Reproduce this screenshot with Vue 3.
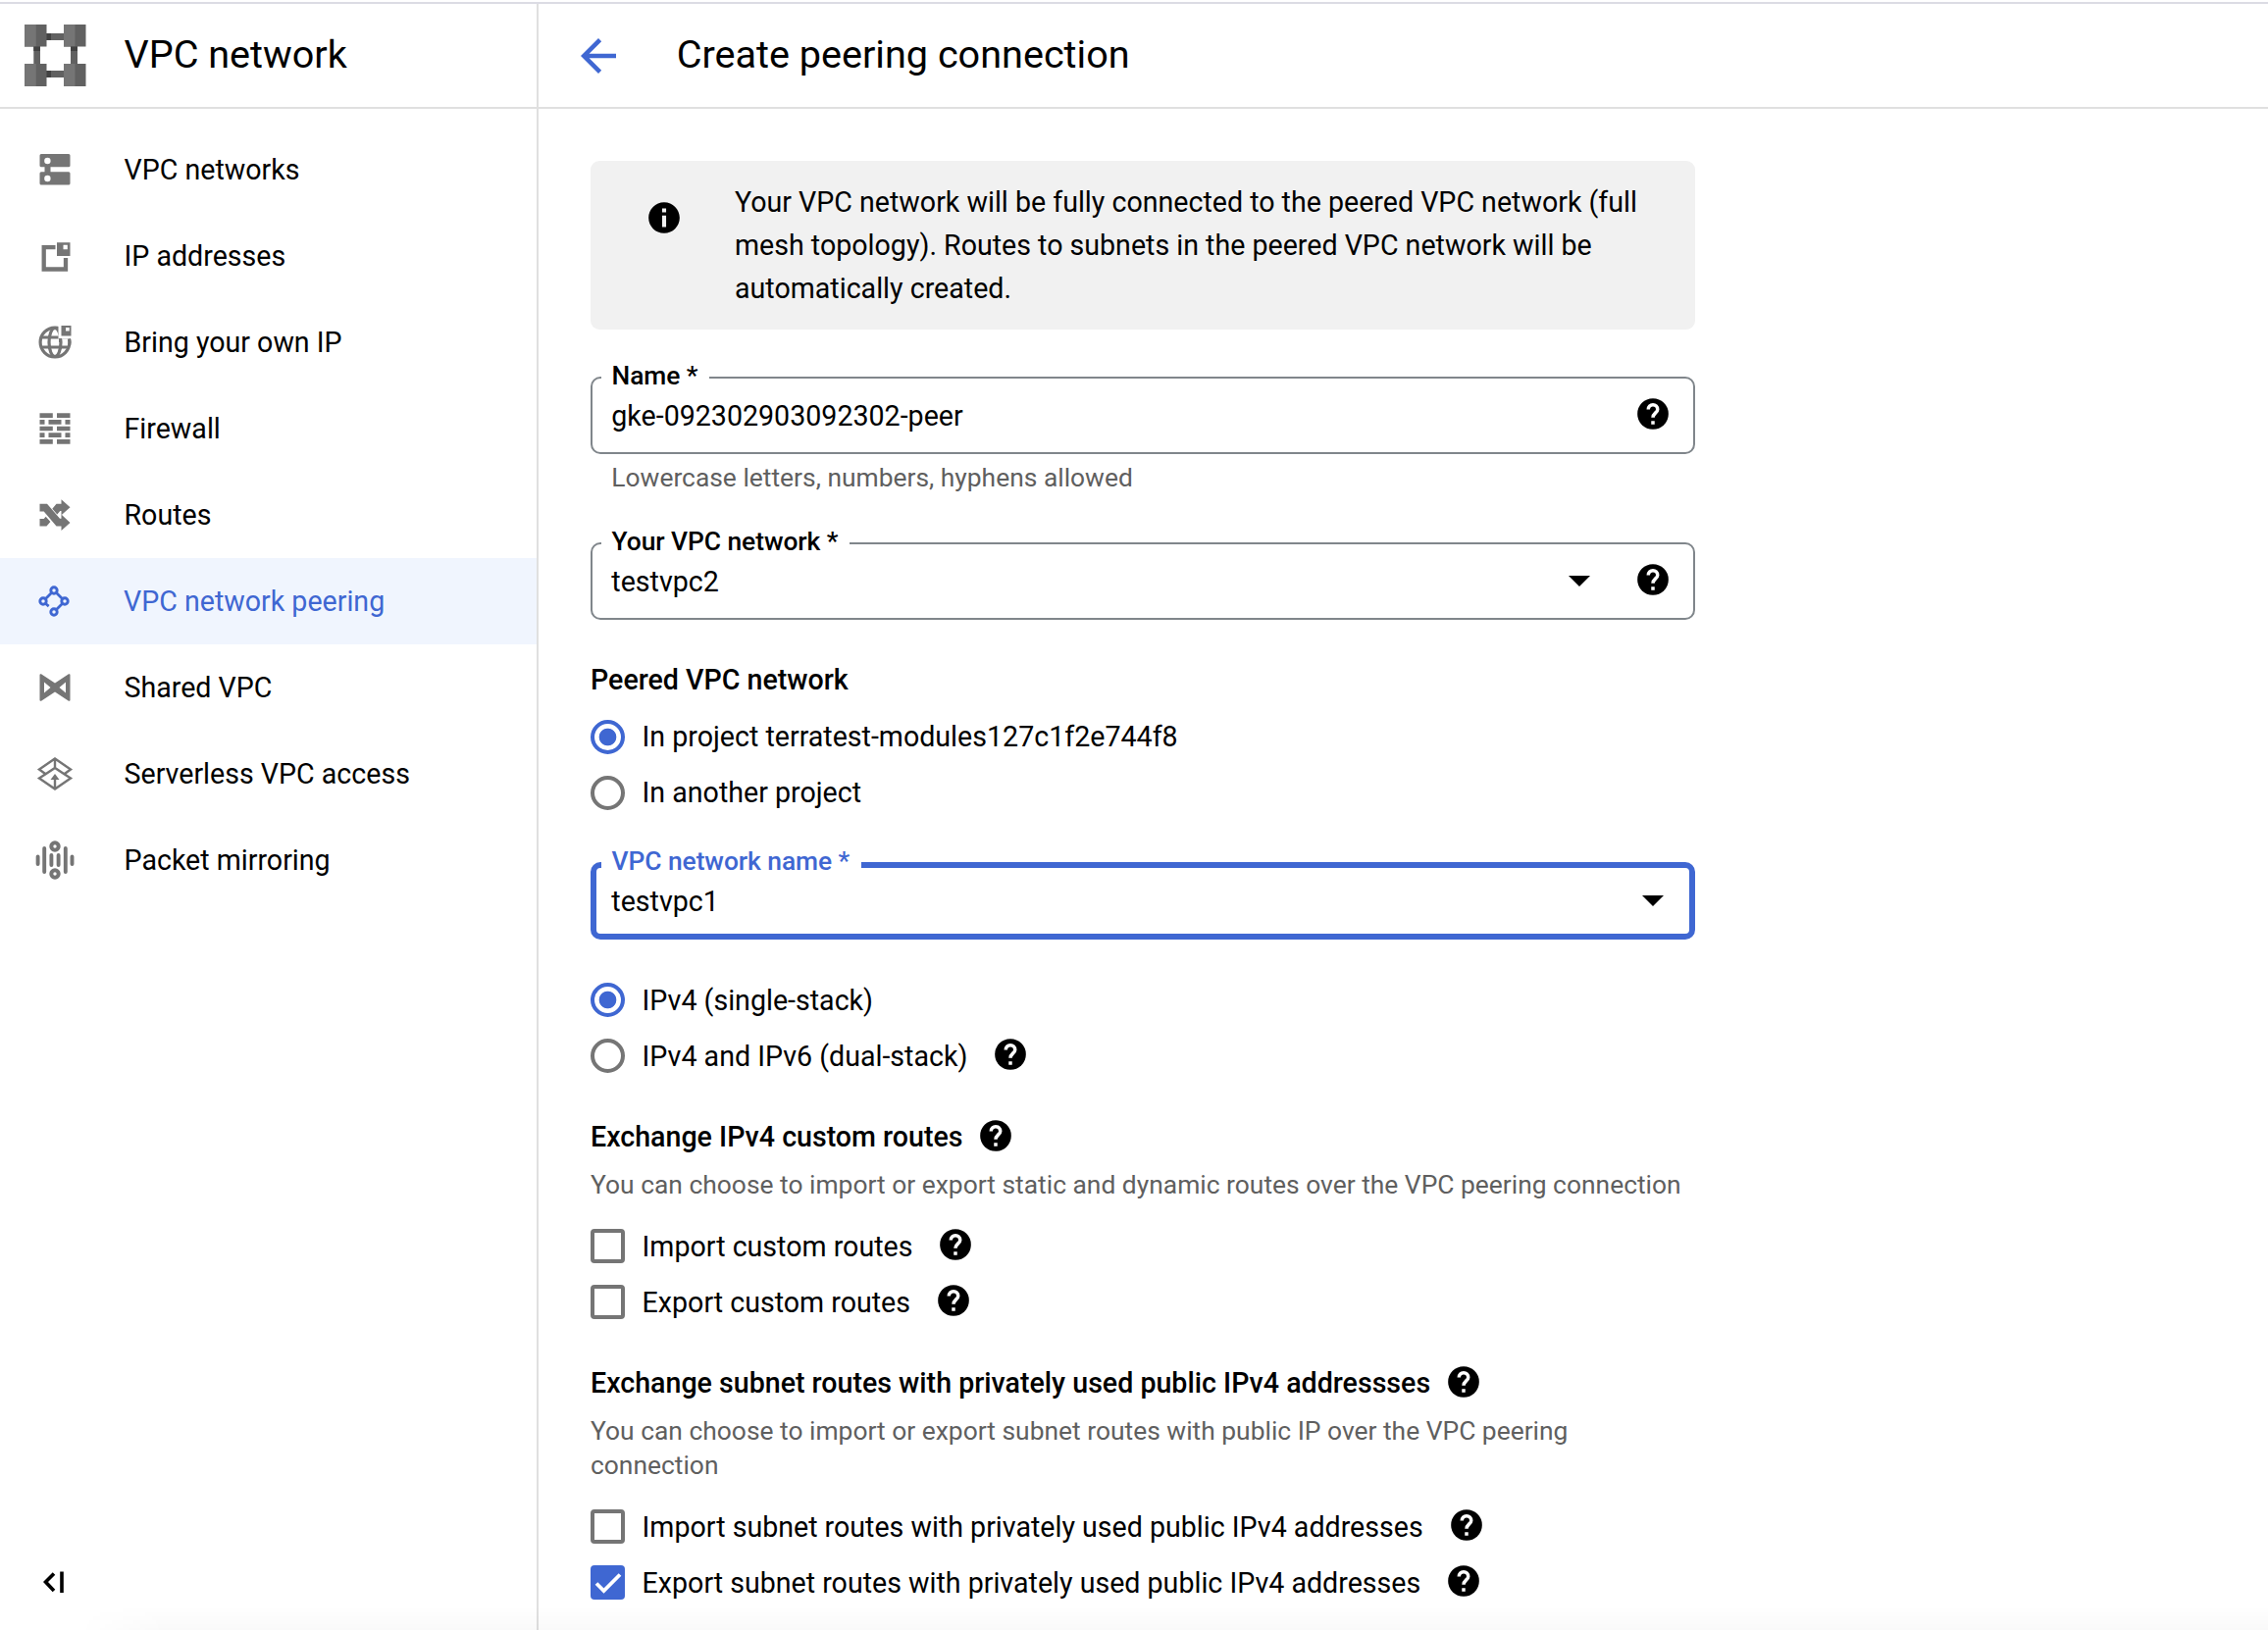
<script setup>
import { h } from 'vue'

const nav = [
  { id: 'networks', label: 'VPC networks' },
  { id: 'addresses', label: 'IP addresses' },
  { id: 'byoip', label: 'Bring your own IP' },
  { id: 'firewall', label: 'Firewall' },
  { id: 'routes', label: 'Routes' },
  { id: 'peering', label: 'VPC network peering', active: true },
  { id: 'shared', label: 'Shared VPC' },
  { id: 'serverless', label: 'Serverless VPC access' },
  { id: 'mirroring', label: 'Packet mirroring' },
]

const projectOptions = [
  { label: 'In project terratest-modules127c1f2e744f8', checked: true },
  { label: 'In another project' },
]
const stackOptions = [
  { label: 'IPv4 (single-stack)', checked: true },
  { label: 'IPv4 and IPv6 (dual-stack)', help: true },
]
const customRoutes = ['Import custom routes', 'Export custom routes']
const subnetRoutes = [
  { label: 'Import subnet routes with privately used public IPv4 addresses' },
  { label: 'Export subnet routes with privately used public IPv4 addresses', checked: true },
]

const HelpIcon = () =>
  h('svg', { width: 38, height: 38, viewBox: '0 0 24 24' }, [
    h('circle', { cx: 12, cy: 12, r: 10 }),
    h('path', {
      d: 'M9 9.200c0-1.760 1.340-3.100 3-3.100s3 1.340 3 3c0 2.100-3 2.400-3 5.300M12 16.500v2.300',
      fill: 'none',
      stroke: '#fff',
      'stroke-width': 2.200,
    }),
  ])
</script>

<template>
  <div class="page">
    <aside class="sidebar">
      <div class="side-head">
        <svg class="logo" width="64" height="64" viewBox="0 0 64 64">
          <g fill="#616161">
            <path d="M22 9h19v7H22zM22 47h19v7H22zM9.300 22H16v19H9.300zM47 22h7v19h-7z" />
            <path d="M0 0h22.500v22.500H0zM40 0h22.500v22.500H40zM0 40h22.500v23H0zM40 40h22.500v23H40z" />
          </g>
          <path fill="#757575" d="M0 0h11.700v22.500H0zM40 0h11.500v22.500H40zM0 40h11.700v23H0zM40 40h11.500v23H40z" />
          <path fill="#424242" d="M22.500 9H27v7h-4.500zM22.500 47H27v7h-4.500zM9.300 22.500H16V27H9.300zM47 22.500h7V27h-7z" />
        </svg>
        <h2>VPC network</h2>
      </div>
      <nav>
        <a v-for="n in nav" :key="n.id" class="item" :class="{ active: n.active }">
          <svg width="40" height="40" viewBox="0 0 40 40" fill="currentColor">
            <g v-if="n.id === 'networks'">
              <path d="M6 4h28a1.500 1.500 0 0 1 1.500 1.500v10.300a1.500 1.500 0 0 1-1.500 1.500H15.500v5H34a1.500 1.500 0 0 1 1.500 1.500v10.300a1.500 1.500 0 0 1-1.500 1.500H6a1.500 1.500 0 0 1-1.500-1.500V23.800A1.500 1.500 0 0 1 6 22.300h3.500v-5H6a1.500 1.500 0 0 1-1.500-1.500V5.500A1.500 1.500 0 0 1 6 4z" />
              <circle cx="12.400" cy="11" r="3.200" fill="#fff" /><circle cx="12.400" cy="29" r="3.200" fill="#fff" />
            </g>
            <g v-else-if="n.id === 'addresses'">
              <path d="M20.500 11.200H8.700v22.300h22.300V22" fill="none" stroke="currentColor" stroke-width="4.300" />
              <path fill-rule="evenodd" d="M22 6.300h13.500V20H22zM28.500 8.800v4.500h4.300V8.800z" />
            </g>
            <g v-else-if="n.id === 'byoip'">
              <g fill="none" stroke="currentColor" stroke-width="3.200">
                <circle cx="20" cy="20" r="14.900" />
                <ellipse cx="20" cy="20" rx="6" ry="14.500" />
                <path d="M6 15h28M6 25h28" />
              </g>
              <path fill="#fff" d="M23.500 1H38v15.500H23.500z" />
              <path d="M25.500 16v4M34.500 16.500q1 3.500 0 7" fill="none" stroke="currentColor" stroke-width="3" />
              <path fill-rule="evenodd" d="M26.500 3h10v10.500h-10zM31 5v3.500h3.700V5z" />
            </g>
            <g v-else-if="n.id === 'firewall'">
              <path d="M4.500 4.300h13.300V9H4.500zM22 4.300h13.500V9H22zM4.500 11h5v4.700h-5zM13.500 11h13v4.700h-13zM30.500 11h5v4.700h-5zM4.500 17.700h13.300v4.600H4.500zM22 17.700h13.500v4.600H22zM4.500 24.300h5V29h-5zM13.500 24.300h13V29h-13zM30.500 24.300h5V29h-5zM4.500 31h13.300v4.700H4.500zM22 31h13.500v4.700H22z" />
            </g>
            <g v-else-if="n.id === 'routes'">
              <path d="M4.500 8.700H12L25 23.700h1.500V19.500l9 8.500-9 8V31.500h-5L8.700 16.500H4.500zM26.500 4.300l9 8-9 8V16h-1.200l-3 3.400-5-5.700 4.200-5h5zM4.500 24h4.200l2-2.300 4.700 5.400-3.900 4.400h-7z" />
            </g>
            <g v-else-if="n.id === 'peering'" fill="none" stroke="currentColor">
              <path d="M16.500 11.500L10.500 17.500M21.500 11.500l6 6M10.500 22.500l3.200 2.600M21.500 28.500l6-6" stroke-width="2.800" />
              <g stroke-width="2.900"><circle cx="19" cy="9" r="3.200" /><circle cx="30" cy="20" r="3.200" /><circle cx="19" cy="31" r="3.200" /><circle cx="8" cy="20" r="3.200" /></g>
            </g>
            <g v-else-if="n.id === 'shared'">
              <path fill-rule="evenodd" d="M6 6.300L20 15.500 34 6.300a1 1 0 0 1 1.500.9v25.600a1 1 0 0 1-1.500.9L20 24.500 6 33.700a1 1 0 0 1-1.500-.9V7.200a1 1 0 0 1 1.500-.9zM9 14.500v11l6.500-5.500zM31 14.500v11l-6.500-5.500z" />
            </g>
            <g v-else-if="n.id === 'serverless'" fill="none" stroke="currentColor" stroke-width="2.400">
              <path d="M20 4.500L36 15.500l-6.500 4.700L20 14 10.500 20.200 4 15.500zM20 4.500V14M10.500 20.200L4 24.500l16 11 16-11-6.500-4.300M20 34V24" />
              <path d="M15.500 26L20 20l4.500 6z" fill="currentColor" stroke="none" />
            </g>
            <g v-else>
              <path d="M2.600 16.500v7.500M9.200 8v24M16.400 15v10M23.600 15v10M30.800 8v24M37.500 16.500v7.500" fill="none" stroke="currentColor" stroke-width="3.900" stroke-linecap="round" />
              <g fill="#fff" stroke="currentColor" stroke-width="4"><circle cx="20" cy="6" r="3.700" /><circle cx="20" cy="34" r="3.700" /></g>
            </g>
          </svg>
          <span>{{ n.label }}</span>
        </a>
      </nav>
      <svg class="collapse" width="22" height="24" viewBox="0 0 22 24">
        <path d="M11 2.500L2.500 11 11 20M19 .500v21.500" fill="none" stroke="#000" stroke-width="3.600" />
      </svg>
    </aside>

    <main>
      <header>
        <svg width="36" height="36" viewBox="4 4 16 16"><path fill="#3f67d2" d="M20 11H7.830l5.590-5.590L12 4l-8 8 8 8 1.410-1.410L7.830 13H20v-2z" /></svg>
        <h1>Create peering connection</h1>
      </header>

      <form>
        <div class="info">
          <svg width="38" height="38" viewBox="0 0 24 24"><path d="M12 2C6.480 2 2 6.480 2 12s4.480 10 10 10 10-4.480 10-10S17.520 2 12 2zm1.300 16h-2.600v-7.500h2.600V18zm0-9.500h-2.600V6h2.600v2.500z" /></svg>
          <p>Your VPC network will be fully connected to the peered VPC network (full mesh topology). Routes to subnets in the peered VPC network will be automatically created.</p>
        </div>

        <div class="field name">
          <label>Name *</label><span class="value">gke-092302903092302-peer</span><HelpIcon />
        </div>
        <p class="hint">Lowercase letters, numbers, hyphens allowed</p>

        <div class="field network">
          <label>Your VPC network *</label><span class="value">testvpc2</span>
          <i class="caret"></i><HelpIcon />
        </div>

        <h3 class="peered">Peered VPC network</h3>
        <div class="group after-title">
          <div v-for="o in projectOptions" :key="o.label" class="option">
            <i class="radio" :class="{ on: o.checked }"></i><span>{{ o.label }}</span>
          </div>
        </div>

        <div class="field focused">
          <label>VPC network name *</label><span class="value">testvpc1</span><i class="caret"></i>
        </div>

        <div class="group stack">
          <div v-for="o in stackOptions" :key="o.label" class="option">
            <i class="radio" :class="{ on: o.checked }"></i><span>{{ o.label }}</span><HelpIcon v-if="o.help" />
          </div>
        </div>

        <h3 class="section">Exchange IPv4 custom routes <HelpIcon /></h3>
        <p class="desc">You can choose to import or export static and dynamic routes over the VPC peering connection</p>
        <div class="group boxes">
          <div v-for="c in customRoutes" :key="c" class="option">
            <i class="check"></i><span>{{ c }}</span><HelpIcon />
          </div>
        </div>

        <h3 class="section">Exchange subnet routes with privately used public IPv4 addressses <HelpIcon /></h3>
        <p class="desc">You can choose to import or export subnet routes with public IP over the VPC peering connection</p>
        <div class="group boxes">
          <div v-for="c in subnetRoutes" :key="c.label" class="option">
            <i class="check" :class="{ on: c.checked }">
              <svg v-if="c.checked" width="35" height="35" viewBox="0 0 35 35"><path d="M6 18.500l7.500 7.500L30 9.500" fill="none" stroke="#fff" stroke-width="3.800" /></svg>
            </i>
            <span>{{ c.label }}</span><HelpIcon />
          </div>
        </div>
      </form>
    </main>
    <div class="shade"></div>
  </div>
</template>

<style>
body { margin: 0; }
</style>

<style scoped>
.page {
  position: relative;
  display: flex;
  box-sizing: border-box;
  width: 2312px;
  height: 1662px;
  padding-top: 2px;
  overflow: hidden;
  background: #fff;
  color: #000;
  font: 28.6px/44px Roboto, sans-serif;
}
.page::before {
  content: '';
  position: absolute;
  inset: 2px 0 auto;
  height: 2px;
  background: #dcdce4;
}
h1, h2, h3, p { margin: 0; }
h1, h2 { font-size: 39.6px; font-weight: 400; }
svg { display: block; flex: none; }

.sidebar {
  display: flex;
  flex-direction: column;
  box-sizing: border-box;
  width: 549px;
  border-right: 2px solid #e0e0e0;
}
.side-head, header {
  display: flex;
  align-items: center;
  box-sizing: border-box;
  height: 109px;
  border-bottom: 2px solid #e0e0e0;
}
.logo { margin-left: 25.300px; margin-top: 2.500px; }
.side-head h2 { margin-left: 37.200px; }
nav { padding-top: 18px; }
.item {
  display: flex;
  align-items: center;
  height: 88px;
  padding-left: 36px;
  color: #757575;
}
.item span { margin-left: 50.500px; color: #000; }
.item.active { background: #f0f5fe; color: #3f67d2; }
.item.active span { margin-left: 50px; color: #3f67d2; }
.collapse { margin: auto 0 36px 44px; }

main { flex: 1; }
header svg { margin: 2.500px 0 0 43.200px; }
header h1 { margin-left: 61.500px; }
form { width: 1126px; margin-left: 53px; padding-top: 53px; }

.info {
  display: flex;
  box-sizing: border-box;
  height: 172px;
  padding: 20px 50px 20px 56px;
  border-radius: 9px;
  background: #f1f1f1;
}
.info svg { margin: 18.500px 53px 0 0; }

.field {
  position: relative;
  display: flex;
  align-items: center;
  box-sizing: border-box;
  height: 79px;
  padding-right: 22px;
  border: 2px solid #80868b;
  border-radius: 10px;
}
.field label {
  position: absolute;
  top: -25px;
  left: 9px;
  height: 32px;
  padding: 0 12px 0 10.500px;
  background: #fff;
  font-size: 26.4px;
  font-weight: 500;
  line-height: 44px;
  letter-spacing: -0.06px;
}
.field .value { flex: 1; margin-left: 19.300px; }
.field svg { margin-top: -3px; }
.name { margin-top: 48px; }
.network { margin-top: 49px; }
.network .caret { margin-right: 45px; }
.focused { margin-top: 42px; padding-right: 26px; border: 6px solid #3f67d2; }
.focused label { top: -29px; left: 5px; color: #3f67d2; }
.focused .value { margin-left: 15.300px; }
.caret {
  border: 11px solid transparent;
  border-top-color: #000;
  border-bottom: 0;
}
.hint, .desc { color: #5f5f5f; font-size: 26.4px; line-height: 35.2px; }
.hint { height: 34px; margin: 7px 0 0 21.300px; }

h3 { display: flex; align-items: center; height: 44px; font-size: 28.6px; font-weight: 500; }
h3 svg { margin: -2px 0 0 14.500px; }
.peered { margin-top: 39px; }
.after-title { margin-top: 7.500px; }
.stack { margin-top: 32.600px; }
.after-title + .focused { margin-top: 42.500px; }
.section { margin-top: 32px; }
.desc { width: 1126px; margin-top: 9.400px; }
.boxes { margin-top: 16px; }
.boxes + .section { margin-top: 32px; }

.option { display: flex; align-items: center; height: 57.2px; }
.option span { margin-left: 17.400px; }
.option svg { margin-top: -3px; margin-left: 25px; }
.radio, .check {
  display: block;
  box-sizing: border-box;
  width: 35.2px;
  height: 35.2px;
  border: 4.400px solid #757575;
  border-radius: 50%;
}
.radio.on { border-color: #3f67d2; background: radial-gradient(circle, #3f67d2 8.400px, #fff 9.200px); }
.check { border-radius: 4px; }
.check.on { border: 0; background: #3f67d2; }
.option .check svg { margin: 0; }

.shade {
  position: absolute;
  right: 0;
  bottom: 0;
  left: 80px;
  height: 24px;
  background: linear-gradient(to top, rgba(0, 0, 0, 0.022), transparent);
  mask-image: linear-gradient(to right, transparent, #000 90px);
}
</style>
